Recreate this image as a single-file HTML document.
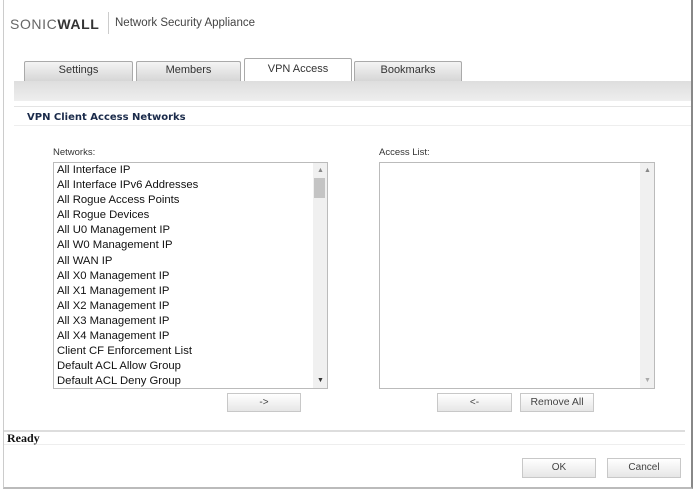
<!DOCTYPE html>
<html><head><meta charset="utf-8"><style>
*{margin:0;padding:0;box-sizing:border-box}
body{width:695px;height:491px;background:#fff;position:relative;overflow:hidden;font-family:"Liberation Sans",Arial,sans-serif;color:#222}
.a{position:absolute}
.frame{left:3px;top:0;width:690px;height:489px;border-left:1px solid #ccc;border-right:2px solid #888;border-bottom:2px solid #bbb}
.tab{position:absolute;top:61px;height:20px;border:1px solid #aaa;border-bottom:none;background:linear-gradient(#f4f4f4,#d6d6d6);font-size:11px;text-align:center;line-height:17px;color:#333;border-radius:2px 2px 0 0}
.tab.act{top:58px;height:23px;background:#fff;line-height:21px}
.btn{position:absolute;height:19px;border:1px solid #c8c8c8;background:linear-gradient(#fff,#e6e6e6);font-size:10px;text-align:center;line-height:17px;color:#444}
.list{position:absolute;top:162px;height:227px;border:1px solid #bbb;background:#fff}
.sb{position:absolute;right:0;top:0;width:14px;height:100%;background:#f0f0f0}
.item{font-size:11.3px;line-height:15.1px;padding-left:3px;color:#111;white-space:nowrap}
</style></head><body>
<div class="a frame"></div>
<div class="a" style="left:10px;top:16px;font-size:14px;letter-spacing:0.6px;color:#666">SONIC<b style="color:#333">WALL</b></div>
<div class="a" style="left:108px;top:12px;width:1px;height:22px;background:#ccc"></div>
<div class="a" style="left:115px;top:17px;font-size:11.5px;color:#444">Network Security Appliance</div>
<div class="tab" style="left:24px;width:109px">Settings</div>
<div class="tab" style="left:136px;width:105px">Members</div>
<div class="tab act" style="left:244px;width:108px">VPN Access</div>
<div class="tab" style="left:354px;width:108px">Bookmarks</div>
<div class="a" style="left:14px;top:81px;width:677px;height:20px;background:linear-gradient(#dedede,#eeeeee)"></div>
<div class="a" style="left:14px;top:106px;width:677px;height:1px;background:#e4e4e4"></div>
<div class="a" style="left:27px;top:112px;font-size:10px;font-weight:bold;color:#1a2a4a;font-family:'DejaVu Sans',sans-serif">VPN Client Access Networks</div>
<div class="a" style="left:14px;top:125px;width:677px;height:1px;background:#eee"></div>
<div class="a" style="left:53px;top:147px;font-size:9.5px;color:#333">Networks:</div>
<div class="a" style="left:379px;top:147px;font-size:9.5px;color:#333">Access List:</div>
<div class="list" style="left:53px;width:275px">
<div class="sb"><div class="a" style="left:4px;top:4px;font-size:7px;color:#888">&#9650;</div><div class="a" style="left:1px;top:15px;width:11px;height:20px;background:#c4c4c4"></div><div class="a" style="left:4px;bottom:4px;font-size:7px;color:#333">&#9660;</div></div>
<div class="item">All Interface IP</div>
<div class="item">All Interface IPv6 Addresses</div>
<div class="item">All Rogue Access Points</div>
<div class="item">All Rogue Devices</div>
<div class="item">All U0 Management IP</div>
<div class="item">All W0 Management IP</div>
<div class="item">All WAN IP</div>
<div class="item">All X0 Management IP</div>
<div class="item">All X1 Management IP</div>
<div class="item">All X2 Management IP</div>
<div class="item">All X3 Management IP</div>
<div class="item">All X4 Management IP</div>
<div class="item">Client CF Enforcement List</div>
<div class="item">Default ACL Allow Group</div>
<div class="item">Default ACL Deny Group</div>
</div>
<div class="list" style="left:379px;width:276px">
<div class="sb"><div class="a" style="left:4px;top:4px;font-size:7px;color:#888">&#9650;</div><div class="a" style="left:4px;bottom:4px;font-size:7px;color:#aaa">&#9660;</div></div>
</div>
<div class="btn" style="left:227px;top:393px;width:74px">-&gt;</div>
<div class="btn" style="left:437px;top:393px;width:75px">&lt;-</div>
<div class="btn" style="left:520px;top:393px;width:74px;font-size:10.5px">Remove All</div>
<div class="a" style="left:4px;top:430px;width:681px;height:2px;background:#ddd"></div>
<div class="a" style="left:4px;top:432px;width:681px;height:13px;border-bottom:1px solid #eee"></div>
<div class="a" style="left:7px;top:431px;font-family:'Liberation Serif',serif;font-weight:bold;font-size:12px;color:#111">Ready</div>
<div class="btn" style="left:522px;top:458px;width:74px;height:20px;line-height:18px">OK</div>
<div class="btn" style="left:607px;top:458px;width:74px;height:20px;line-height:18px">Cancel</div>
</body></html>
